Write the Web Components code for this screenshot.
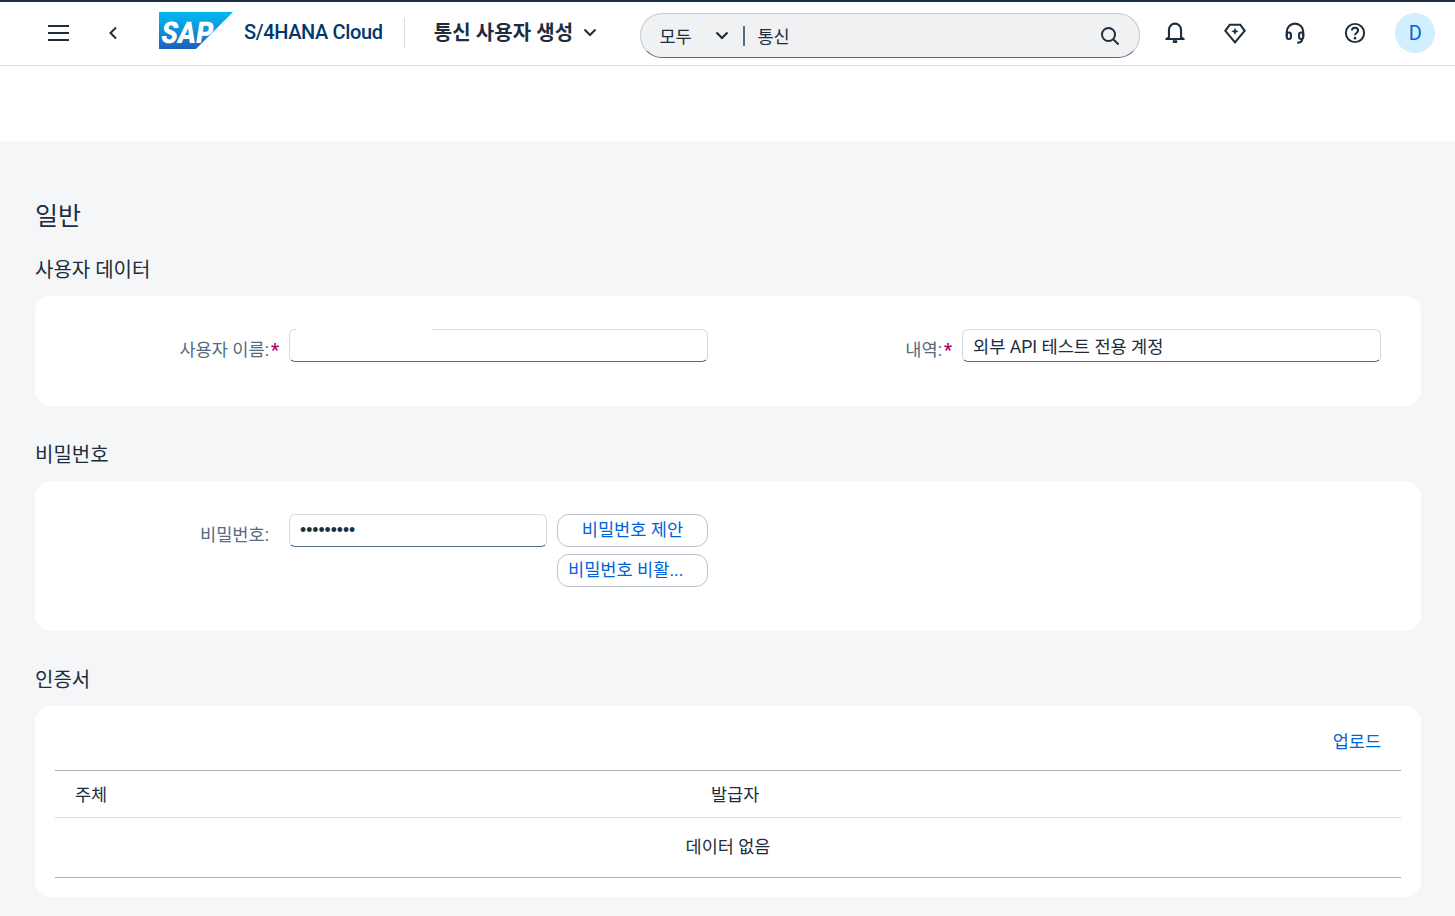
<!DOCTYPE html>
<html lang="ko"><head><meta charset="utf-8"><title>통신 사용자 생성</title>
<style>
html,body{margin:0;padding:0;background:#f5f6f7}
body{font-family:Roboto,"Noto Sans CJK KR",sans-serif;color:#1d2d3e;width:1455px;height:916px;overflow:hidden}
</style></head><body>
<app-page></app-page>
<script>
const F='Roboto,"Noto Sans CJK KR",sans-serif';
function def(name,html,init){customElements.define(name,class extends HTMLElement{constructor(){super();this.attachShadow({mode:'open'}).innerHTML=html;}connectedCallback(){init&&init(this)}})}

def('icon-btn',`<style>:host{display:flex;width:60px;height:36px;align-items:center;justify-content:center}::slotted(svg){width:22px;height:22px;display:block}</style><slot></slot>`);

def('sap-logo',`<style>:host{display:block;width:74px;height:37px}svg{display:block}text{font:900 30px Roboto,sans-serif}</style>
<svg width="74" height="37" viewBox="0 0 74 37"><defs><linearGradient id="g" x1="0" y1="0" x2="0" y2="1"><stop offset="0" stop-color="#00b8f1"/><stop offset=".4" stop-color="#0a9be0"/><stop offset="1" stop-color="#1e5fbb"/></linearGradient></defs><polygon points="0,0 74,0 37,37 0,37" fill="url(#g)"/><text x="0" y="0" transform="translate(1 31) skewX(-9)" textLength="52" lengthAdjust="spacingAndGlyphs" fill="#fff">SAP</text></svg>`);

def('shell-bar',`<style>
:host{display:flex;align-items:center;height:61px;padding-bottom:2px;border-top:2px solid #1d2d3e;border-bottom:1px solid #d9d9d9;background:#fff;box-sizing:content-box;font-family:${F}}
.menu{width:22px;height:16px;margin-left:48px;display:block}
.back{margin-left:37px;width:12px;height:14px;display:block}
sap-logo{margin-left:40px;position:relative;top:-2px}
.prod{margin-left:11px;font-size:20px;font-weight:500;letter-spacing:-.36px;color:#00396e;white-space:nowrap;position:relative;top:-1px}
.sep{width:1px;height:30px;background:#d9dde2;margin-left:21px}
.title{margin-left:29px;font-size:20px;font-weight:700;letter-spacing:.1px;color:#1d2d3e;white-space:nowrap;position:relative;top:-1px}
.caret{margin-left:10px;width:14px;height:9px;display:block}
.search{margin-left:43px;margin-top:6px;width:498px;height:41px;padding-bottom:2px;border:1px solid #c3cad2;border-bottom:1px solid #556b82;border-radius:22px;background:#eff1f2;display:flex;align-items:center;box-sizing:content-box;font-size:17.5px;color:#1d2d3e}
.all{margin-left:18px;width:56px;position:relative;top:1px}
.sc{width:14px;height:9px;display:block;position:relative;top:1px}
.bar{width:2px;height:20px;background:#556b82;margin-left:14px;position:relative;top:1px}
.q{margin-left:12px;flex:1;position:relative;top:1px}
.mag{width:20px;height:20px;margin-right:19px;display:block;position:relative;top:1px}
.icons{display:flex;margin-left:5px}
.av{width:40px;height:40px;border-radius:50%;background:#d1efff;color:#0064d9;font-size:20px;display:flex;align-items:center;justify-content:center;margin-left:10px}
</style>
<svg class="menu" viewBox="0 0 22 16" fill="#1d2d3e"><rect y="0" width="21" height="2"/><rect y="7" width="21" height="2"/><rect y="14" width="21" height="2"/></svg>
<svg class="back" viewBox="0 0 12 14" fill="none" stroke="#1d2d3e" stroke-width="2"><path d="M9 1.5 3.5 7 9 12.5"/></svg>
<sap-logo></sap-logo>
<span class="prod">S/4HANA Cloud</span>
<span class="sep"></span>
<span class="title">통신 사용자 생성</span>
<svg class="caret" viewBox="0 0 14 9" fill="none" stroke="#1d2d3e" stroke-width="2"><path d="M1.5 1.5 7 7l5.500-5.500"/></svg>
<div class="search"><span class="all">모두</span><svg class="sc" viewBox="0 0 14 9" fill="none" stroke="#1d2d3e" stroke-width="2.200"><path d="M1.500 1.500 7 7l5.500-5.500"/></svg><span class="bar"></span><span class="q">통신</span>
<svg class="mag" viewBox="0 0 20 20" fill="none" stroke="#1d2d3e" stroke-width="2"><circle cx="8.500" cy="8.500" r="6.500"/><path d="m13.500 13.500 5 5"/></svg></div>
<div class="icons">
<icon-btn><svg viewBox="0 0 20 20" fill="none" stroke="#1d2d3e" stroke-width="1.900" stroke-linejoin="round"><path d="M4.500 14V7a5.500 5.500 0 0 1 11 0v7l2.500 1.500H2z"/><path d="M8 17.800h4" stroke-width="2.500"/></svg></icon-btn>
<icon-btn><svg viewBox="0 0 20 20" fill="none" stroke="#1d2d3e" stroke-width="1.900" stroke-linejoin="miter"><path d="M5.200 2.500h9.600l4 5.500L10 18.500 1.200 8z"/><path d="M10 5.200 11 7.500l2.300 1-2.300 1-1 2.300-1-2.300-2.300-1L9 7.500z" fill="#1d2d3e" stroke="none"/></svg></icon-btn>
<icon-btn><svg viewBox="0 0 20 20" fill="none" stroke="#1d2d3e" stroke-width="1.900" stroke-linejoin="round"><path d="M2.500 13V9a7.500 7.500 0 0 1 15 0v4"/><rect x="2.500" y="9.500" width="3.800" height="6" rx="1.800"/><rect x="13.700" y="9.500" width="3.800" height="6" rx="1.800"/><path d="M16.500 15.500c0 2.200-1.800 3.300-4.500 3.300"/></svg></icon-btn>
<icon-btn><svg viewBox="0 0 20 20" fill="none" stroke="#1d2d3e" stroke-width="1.800"><circle cx="10" cy="10" r="8.300"/><path d="M7.200 7.800C7.200 6 8.500 5.200 10 5.200s2.800 1 2.800 2.500c0 2.300-2.800 2.200-2.800 4.300"/><circle cx="10" cy="14.700" r="1.200" fill="#1d2d3e" stroke="none"/></svg></icon-btn>
</div>
<div class="av">D</div>`);

def('sec-title',`<style>:host{display:block;font-size:20px;line-height:28px;color:#1d2d3e;font-family:${F}}</style><slot></slot>`);

def('form-card',`<style>:host{display:block;background:#fff;border-radius:16px;padding:33px 20px 0;box-sizing:border-box;height:var(--h)}</style><slot></slot>`);

def('field-label',`<style>:host{display:block;text-align:right;font-size:17.6px;line-height:24px;padding-top:9px;color:#556b82;font-family:${F};white-space:nowrap}.r{display:inline-block;width:10px;text-align:right;color:#b5006a;font-weight:700;font-size:17.5px;line-height:20px}</style><slot></slot><span class="r" id="r"></span>`,el=>{if(el.hasAttribute('required'))el.shadowRoot.getElementById('r').textContent='*'});

def('text-field',`<style>:host{display:block;height:33px;box-sizing:border-box;border:1px solid #d5dadd;border-bottom:1px solid #556b82;border-radius:6px;background:#fff;padding:0 10px;font-size:17.6px;line-height:35px;color:#1d2d3e;white-space:nowrap;position:relative;font-family:${F}}
:host([gap])::after{content:"";position:absolute;left:6px;top:-1px;width:136px;height:1px;background:#fff}
:host([secret]){font-family:"Liberation Sans",sans-serif;line-height:31px;font-size:17.5px}</style><slot></slot>`);

def('ghost-btn',`<style>:host{display:block;height:33px;box-sizing:border-box;border:1px solid #bcc3ca;border-radius:12px;background:#fff;color:#0064d9;font-size:17.6px;line-height:31px;text-align:center;white-space:nowrap;overflow:hidden;padding:0 10px;font-family:${F}}:host([left]){text-align:left}</style><slot></slot>`);

def('data-table',`<style>
:host{display:block;font-family:${F};font-size:17.5px;color:#1d2d3e}
.up{height:39px;box-sizing:border-box;text-align:right;color:#0064d9;padding-right:20px;line-height:22px;margin-top:-8px}
.top{border-top:1px solid #a9b4be}
.h{display:grid;grid-template-columns:636px 1fr;height:44px;padding-bottom:2px;align-items:center;border-bottom:1px solid #d5dadd;padding-left:20px}
.e{height:59px;border-bottom:1px solid #a9b4be;text-align:center;line-height:58px}
</style><div class="up">업로드</div><div class="top"><div class="h"><span>주체</span><span>발급자</span></div><div class="e">데이터 없음</div></div>`);

def('app-page',`<style>
:host{display:block;font-family:${F}}
.band{height:75px;background:#fff}
main{padding:0 34px 0 35px}
.h1{font-size:25px;line-height:32px;margin-top:60px;color:#1d2d3e}
.s1{margin-top:23px;margin-bottom:12px}
.s2{margin-top:35px;margin-bottom:12px}
.s3{margin-top:35px;margin-bottom:12px}
.g1{display:grid;grid-template-columns:224px 419px 234px 419px;column-gap:10px}
.g2{display:grid;grid-template-columns:224px 258px 151px;column-gap:10px;row-gap:7px}
.b2{grid-column:3}
</style>
<shell-bar></shell-bar>
<div class="band"></div>
<main>
<div class="h1">일반</div>
<sec-title class="s1">사용자 데이터</sec-title>
<form-card style="--h:110px"><div class="g1"><field-label required>사용자 이름:</field-label><text-field gap></text-field><field-label required>내역:</field-label><text-field>외부 API 테스트 전용 계정</text-field></div></form-card>
<sec-title class="s2">비밀번호</sec-title>
<form-card style="--h:150px"><div class="g2"><field-label>비밀번호:</field-label><text-field secret>•••••••••</text-field><ghost-btn>비밀번호 제안</ghost-btn><ghost-btn class="b2" left>비밀번호 비활...</ghost-btn></div></form-card>
<sec-title class="s3">인증서</sec-title>
<form-card style="--h:191px"><data-table></data-table></form-card>
</main>`);
</script>
</body></html>
